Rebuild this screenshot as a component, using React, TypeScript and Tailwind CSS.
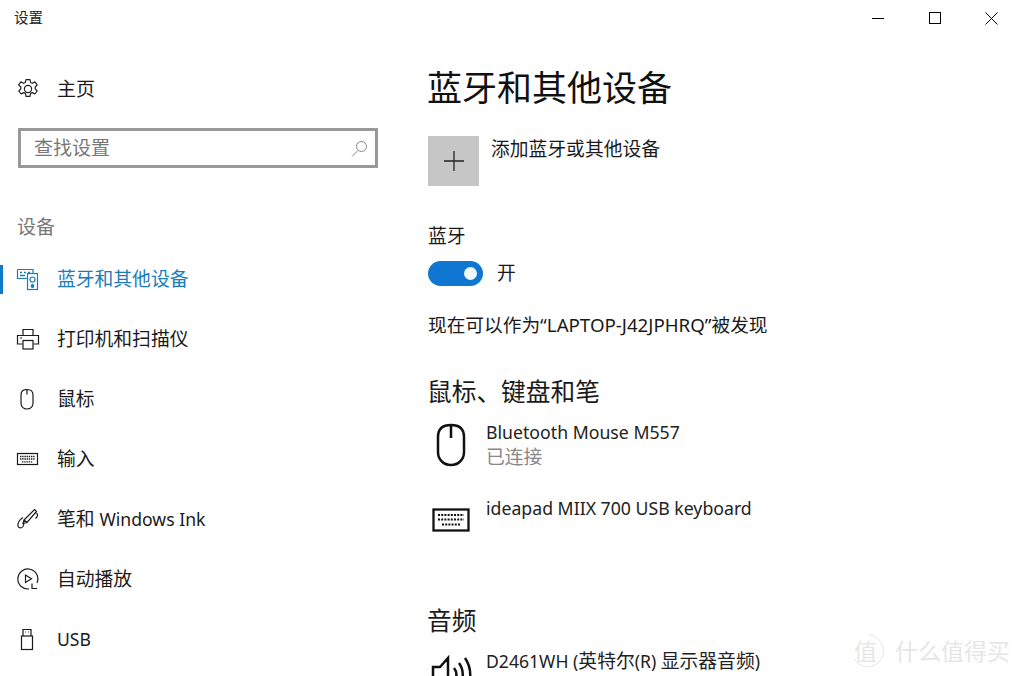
import React from "react";

const font = { fontFamily: '"Noto Sans","Noto Sans CJK SC",sans-serif' };

const S = ({ children, size = 24, className = "" }: { children: React.ReactNode; size?: number; className?: string }) => (
  <svg width={size} height={size} viewBox="0 0 24 24" fill="none" stroke="currentColor" strokeWidth={1.2} className={className}>
    {children}
  </svg>
);

const Gear = () => (
  <S>
    <path d="M10 2.600h4l.6 2.900 1.700.8 2.600-1.400 2.300 3-2 2.100v1.900l2 2.100-2.300 3-2.600-1.400-1.700.8-.6 2.900h-4l-.6-2.900-1.700-.8-2.600 1.400-2.300-3 2-2.100V10L2.600 7.900l2.300-3 2.600 1.400 1.700-.8z" strokeLinejoin="round" />
    <circle cx="12" cy="12" r="3.600" />
  </S>
);
const BtIcon = () => (
  <S>
    <path d="M1.500 2.500h15.500v3.500M1.500 2.500v9h9.500" />
    <path d="M4 5.500h2M8 5.500h2M12 5.500h2M4 8.500h5" strokeWidth={1.4} />
    <rect x="11.500" y="6.500" width="10" height="16" />
    <circle cx="16.500" cy="12.500" r="2.500" />
    <circle cx="16.500" cy="19" r="1.300" fill="currentColor" />
  </S>
);
const Printer = () => (
  <S>
    <path d="M7 8V2.500h10V8M6.500 17H1.500V8.500h21V17h-5" />
    <rect x="7" y="13.500" width="10" height="8.500" />
    <path d="M4 11h2" />
  </S>
);
const MouseI = () => (
  <S>
    <path d="M11 2.500c-4 0-6 1.500-6 5.500v8c0 3.500 2.500 6 6 6s6-2.500 6-6V8c0-4-2-5.500-6-5.500zM11 2.500v5" />
  </S>
);
const Kbd = () => (
  <S>
    <rect x="1.500" y="6.500" width="20" height="11" />
    <path d="M4 9.500h15M4 12h15M6 14.800h11" strokeDasharray="1.400 .8" strokeWidth={1.3} />
  </S>
);
const Pen = () => (
  <S>
    <path d="M18.500 2.500l2 2L11 15.500l-3-2.500zM8 13l-1 3.500 4-1M20.500 6c1.500 1.500 1.500 3.500-1 5.500" />
    <path d="M7 10.500c-3 2-5.500 5.500-5 8.500.5 2.500 3.500 2.500 5 .5 1-1.500 1-3 .5-4" />
  </S>
);
const Play = () => (
  <S>
    <path d="M13 21.900A10 10 0 1 1 21 16" />
    <path d="M9.500 8v7.500l6-3.700z" />
    <path d="M16 16.500v5h5" />
  </S>
);
const Usb = () => (
  <S>
    <rect x="5.500" y="9" width="11" height="13.500" />
    <path d="M7 9V2.500h8V9M9 5h.8M12.200 5h.8" />
  </S>
);

const Lat = ({ children }: { children: React.ReactNode }) => <span className="text-[17.600px]">{children}</span>;

const nav = [
  { icon: <BtIcon />, label: <>蓝牙和其他设备</>, active: true },
  { icon: <Printer />, label: <>打印机和扫描仪</> },
  { icon: <MouseI />, label: <>鼠标</> },
  { icon: <Kbd />, label: <>输入</> },
  { icon: <Pen />, label: <>笔和 <Lat>Windows Ink</Lat></> },
  { icon: <Play />, label: <>自动播放</> },
  { icon: <Usb />, label: <Lat>USB</Lat> },
];

export default function App() {
  return (
    <div style={font} className="relative w-[1021px] h-[676px] overflow-hidden bg-white text-[#1a1a1a]">
      <div className="flex h-[36px] items-center justify-between pl-[14px]">
        <span className="text-[14.500px] text-[#222]">设置</span>
        <div className="flex items-center">
          <div className="flex h-[36px] w-[57px] items-center justify-center">
            <div className="h-px w-[12px] bg-black" />
          </div>
          <div className="flex h-[36px] w-[57px] items-center justify-center">
            <div className="h-[12px] w-[12px] border border-black" />
          </div>
          <div className="flex h-[36px] w-[58px] items-center justify-center pr-[2px]">
            <svg width="13" height="13" viewBox="0 0 13 13" stroke="#000" strokeWidth="1"><path d="M.5.500l12 12M12.500.500l-12 12" /></svg>
          </div>
        </div>
      </div>
      <div className="flex">
        <aside className="w-[428px] shrink-0">
          <div className="flex h-[40px] mt-[33px] items-center pl-[16px]">
            <span className="w-[41px] text-[#222]"><Gear /></span>
            <span className="text-[19px]">主页</span>
          </div>
          <div className="ml-[18px] mt-[19px] flex h-[40px] w-[360px] items-center justify-between border-[3px] border-[#999] pl-[13px] pr-[7px]">
            <span className="text-[19px] text-[#777]">查找设置</span>
            <svg width="17" height="17" viewBox="0 0 17 17" fill="none" stroke="#888" strokeWidth="1"><circle cx="10.500" cy="6.500" r="5" /><path d="M7 10.500L1 16.500" /></svg>
          </div>
          <div className="mt-[43px] h-[32px] pl-[17px] text-[19px] leading-[32px] text-[#777]">设备</div>
          <nav className="mt-[6px]">
            {nav.map((n, i) => (
              <div key={i} className={`relative flex h-[60px] items-center pl-[16px] ${n.active ? "text-[#1a7cb8]" : ""}`}>
                {n.active && <div className="absolute left-0 top-[16px] h-[29px] w-[3px] bg-[#0f7bc8]" />}
                <span className="w-[41px] shrink-0">{n.icon}</span>
                <span className="text-[18.800px]">{n.label}</span>
              </div>
            ))}
          </nav>
        </aside>
        <main className="flex-1">
          <h1 className="mt-[28px] -ml-px h-[48px] text-[35px] leading-[48px] font-normal text-[#111]">蓝牙和其他设备</h1>
          <div className="mt-[24px] flex">
            <div className="flex h-[50px] w-[51px] items-center justify-center bg-[#c6c6c6]">
              <svg width="22" height="22" viewBox="0 0 22 22" stroke="#222" strokeWidth="1.300"><path d="M11 1v20M1 11h20" /></svg>
            </div>
            <span className="ml-[12px] -mt-[1px] text-[18.800px] leading-[28px]">添加蓝牙或其他设备</span>
          </div>
          <div className="mt-[36px] text-[18.800px] leading-[28px]">蓝牙</div>
          <div className="mt-[9px] flex items-center">
            <div className="flex h-[25px] w-[55px] items-center justify-end rounded-full bg-[#0f76d1] pr-[6px]">
              <div className="h-[13px] w-[13px] rounded-full bg-[#f4fbff]" />
            </div>
            <span className="ml-[14px] text-[18.800px]">开</span>
          </div>
          <div className="mt-[24px] text-[18.700px] leading-[28px]">现在可以作为“LAPTOP-J42JPHRQ”被发现</div>
          <h2 className="-ml-px mt-[35px] text-[24.700px] leading-[36px] font-normal">鼠标、键盘和笔</h2>
          <div className="mt-[10px] flex">
            <div className="flex w-[58px] justify-start pl-[4px] pt-[2px] text-[#111]">
              <svg width="38" height="46" viewBox="0 0 38 46" fill="none" stroke="currentColor" strokeWidth="2.500"><path d="M19 3C10 3 6 7 6 15v15c0 8 6 13 13 13s13-5 13-13V15C32 7 28 3 19 3zM19 3v13" /></svg>
            </div>
            <div>
              <div className="text-[17.700px] leading-[25px] text-[#222]">Bluetooth Mouse M557</div>
              <div className="text-[18.800px] leading-[25px] text-[#888]">已连接</div>
            </div>
          </div>
          <div className="mt-[26px] flex">
            <div className="w-[58px] pl-[4px] pt-[12px] text-[#111]">
              <svg width="38" height="24" viewBox="0 0 38 24" fill="none" stroke="currentColor" strokeWidth="2.300"><rect x="1.500" y="1.500" width="35" height="21" /><path d="M6 7h26M6 11.500h26M10 16.500h18" strokeDasharray="2 1.200" strokeWidth="2" /></svg>
            </div>
            <div className="text-[17.700px] leading-[25px] text-[#222]">ideapad MIIX 700 USB keyboard</div>
          </div>
          <h2 className="-ml-px mt-[71px] text-[24.700px] leading-[36px] font-normal">音频</h2>
          <div className="mt-[10px] flex">
            <div className="w-[58px] pl-[3px] pt-[6px] text-[#111]">
              <svg width="44" height="40" viewBox="0 0 44 40" fill="none" stroke="currentColor" strokeWidth="2.500"><path d="M2 12h7l8-9v34l-8-9H2zM23 13c3 4 3 9 0 13M28 8c5 7 5 16 0 23M34 3c7 10 7 24 0 34" /></svg>
            </div>
            <div className="text-[18.800px] leading-[25px] text-[#222]"><Lat>D2461WH (</Lat>英特尔<Lat>(R) </Lat>显示器音频<Lat>)</Lat></div>
          </div>
        </main>
      </div>
      <div className="absolute bottom-[9px] right-[11px] flex items-center text-[#e6e6e6]">
        <span className="relative flex h-[32px] w-[29px] items-center justify-start text-[23px] leading-none">
          值
          <svg width="32" height="34" viewBox="0 0 32 34" fill="none" stroke="#e6e6e6" strokeWidth="1" className="absolute -left-[2px] -top-px">
            <path d="M17 1a16 16 0 0 1 9 28 16 16 0 0 1-24-4" />
          </svg>
        </span>
        <span className="ml-[12px] text-[23px] leading-none">什么值得买</span>
      </div>
    </div>
  );
}
